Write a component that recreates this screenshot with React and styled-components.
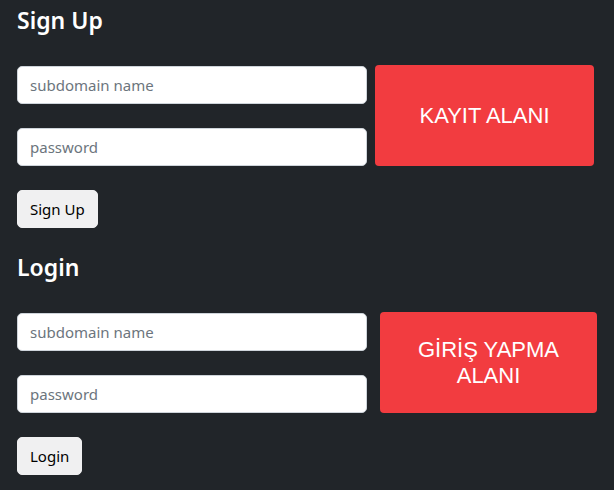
import React from "react";
import styled, { createGlobalStyle } from "styled-components";

const Global = createGlobalStyle`
  html, body { margin: 0; padding: 0; background: #212529; }
  body { font-family: "Noto Sans", "Open Sans", sans-serif; color: #fff; }
  * { box-sizing: border-box; }
`;

const Page = styled.div`
  min-height: 490px;
  padding: 6px 17px 0;
  display: flex;
  flex-direction: column;
  gap: 25px;
`;

const Section = styled.section`
  display: flex;
  flex-direction: column;
`;

const Title = styled.h3`
  margin: 0 0 31px;
  font-size: 23px;
  line-height: 29px;
  font-weight: 600;
  color: #fff;
`;

const Row = styled.div`
  display: flex;
  align-items: flex-start;
`;

const Fields = styled.div`
  width: 350px;
  display: flex;
  flex-direction: column;
  gap: 24px;
`;

const Input = styled.input`
  display: block;
  width: 100%;
  height: 38px;
  padding: 6px 12px;
  font-family: inherit;
  font-size: 15px;
  line-height: 24px;
  color: #212529;
  background: #fff;
  border: 1px solid #ced4da;
  border-radius: 5px;
  outline: none;
  &::placeholder { color: #6c757d; opacity: 1; }
`;

const Area = styled.div`
  margin-left: ${(p) => p.$gap}px;
  margin-top: -1px;
  width: ${(p) => p.$w}px;
  height: 101px;
  padding: 0 34px;
  background: #f23c40;
  border-radius: 4px;
  display: flex;
  align-items: center;
  justify-content: center;
  text-align: center;
  font-family: "Liberation Sans", Arial, sans-serif;
  font-size: 22px;
  line-height: 26px;
  color: #fff;
`;

const Button = styled.button`
  align-self: flex-start;
  margin-top: 24px;
  height: 38px;
  padding: 6px 12px;
  font-family: inherit;
  font-size: 15px;
  line-height: 24px;
  color: #000;
  background: #f0f0f1;
  border: 1px solid #f0f0f1;
  border-radius: 5px;
  cursor: pointer;
`;

function FormBlock({ title, area, gap, w, action }) {
  return (
    <Section>
      <Title>{title}</Title>
      <Row>
        <Fields>
          <Input type="text" placeholder="subdomain name" />
          <Input type="password" placeholder="password" />
        </Fields>
        <Area $gap={gap} $w={w}>{area}</Area>
      </Row>
      <Button>{action}</Button>
    </Section>
  );
}

export default function App() {
  return (
    <>
      <Global />
      <Page>
        <FormBlock title="Sign Up" area="KAYIT ALANI" gap={8} w={219} action="Sign Up" />
        <FormBlock title="Login" area="GİRİŞ YAPMA ALANI" gap={13} w={217} action="Login" />
      </Page>
    </>
  );
}
